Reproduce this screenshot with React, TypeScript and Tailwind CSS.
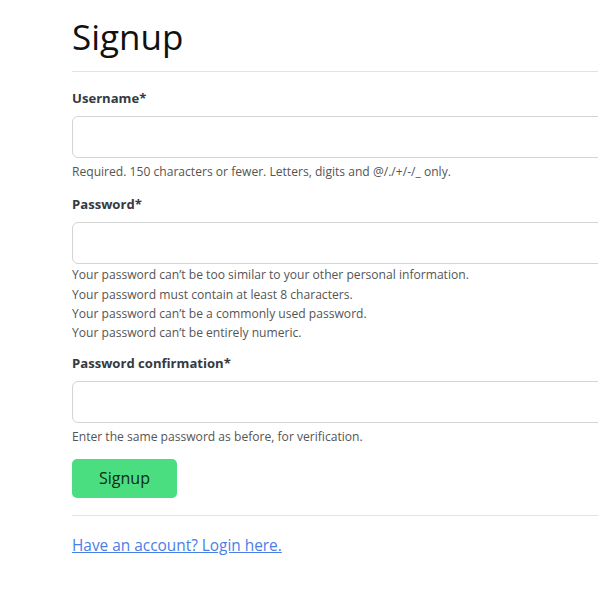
import React from "react";

const font = { fontFamily: '"Open Sans", "Noto Sans", sans-serif' };

function Field({ label, type, className, children }: { label: string; type: string; className?: string; children: React.ReactNode }) {
  return (
    <div className={className}>
      <label className="block text-[13.1px] leading-[21px] font-bold text-[#343a40]">{label}</label>
      <input
        type={type}
        className="mt-[7px] block h-[42px] w-full rounded-[6px] border border-[#d4d4d4] bg-white px-3 outline-none"
      />
      {children}
    </div>
  );
}

export default function App() {
  return (
    <div className="w-full min-h-[596px] overflow-hidden bg-white" style={font}>
      <div className="ml-[72px] w-[640px] pt-[13px]">
        <h1 className="text-[35px] leading-[48px] font-normal text-[#111]">Signup</h1>
        <hr className="mt-[10px] border-t border-[#e2e2e2]" />
        <form className="mt-[16px] flex flex-col">
          <Field label="Username*" type="text">
            <p className="mt-[4px] text-[12.1px] leading-[19.2px] text-[#555]">
              Required. 150 characters or fewer. Letters, digits and @/./+/-/_ only.
            </p>
          </Field>
          <Field label="Password*" type="password" className="mt-[13px]">
            <ul className="mt-[1px] text-[12.1px] leading-[19.3px] text-[#555]">
              <li>Your password can’t be too similar to your other personal information.</li>
              <li>Your password must contain at least 8 characters.</li>
              <li>Your password can’t be a commonly used password.</li>
              <li>Your password can’t be entirely numeric.</li>
            </ul>
          </Field>
          <Field label="Password confirmation*" type="password" className="mt-[11px]">
            <p className="mt-[4px] text-[12.1px] leading-[19.2px] text-[#555]">
              Enter the same password as before, for verification.
            </p>
          </Field>
          <div className="mt-[12px]">
            <button
              type="button"
              className="h-[39px] w-[105px] rounded-[5px] bg-[#4ade80] text-[16px] text-[#0f2a17]"
            >
              Signup
            </button>
          </div>
        </form>
        <hr className="mt-[17px] border-t border-[#e2e2e2]" />
        <a href="#" className="mt-[18px] inline-block text-[15.4px] leading-[24px] text-[#4a7ee8] underline">
          Have an account? Login here.
        </a>
      </div>
    </div>
  );
}
